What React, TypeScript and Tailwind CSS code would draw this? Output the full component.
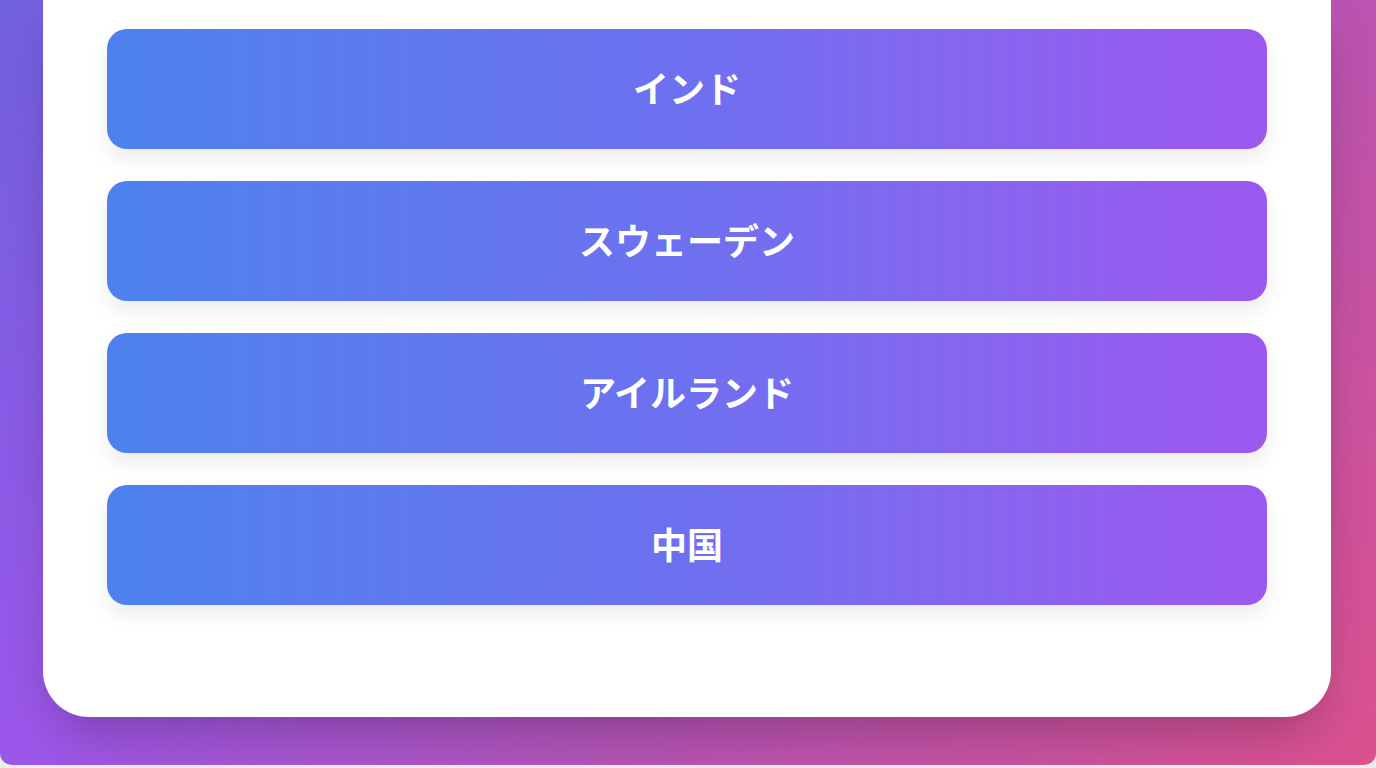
const countries = ["インド", "スウェーデン", "アイルランド", "中国"];

export default function App() {
  return (
    <div className="h-[768px] w-full overflow-hidden bg-[#ececec]">
      <div className="h-[765px] rounded-b-[12px] bg-[linear-gradient(130deg,#7061e0_0%,#9c57ea_32%,#b454b6_62%,#dc518e_100%)] pl-[43px] pr-[45px]">
        <div className="h-[717px] rounded-b-[46px] bg-white px-16 pt-[29px] shadow-2xl">
          <div className="flex flex-col gap-8">
            {countries.map((name) => (
              <button
                key={name}
                className="flex h-[120px] w-full items-center justify-center rounded-[20px] bg-gradient-to-r from-[#4c82ee] via-[#6d70ef] to-[#9c58ef] pb-[5px] text-[36px] font-bold text-white shadow-[0_10px_20px_rgba(0,0,0,0.08)]"
                style={{ fontFamily: '"Noto Sans CJK JP", "Noto Sans", sans-serif' }}
              >
                {name}
              </button>
            ))}
          </div>
        </div>
      </div>
    </div>
  );
}
